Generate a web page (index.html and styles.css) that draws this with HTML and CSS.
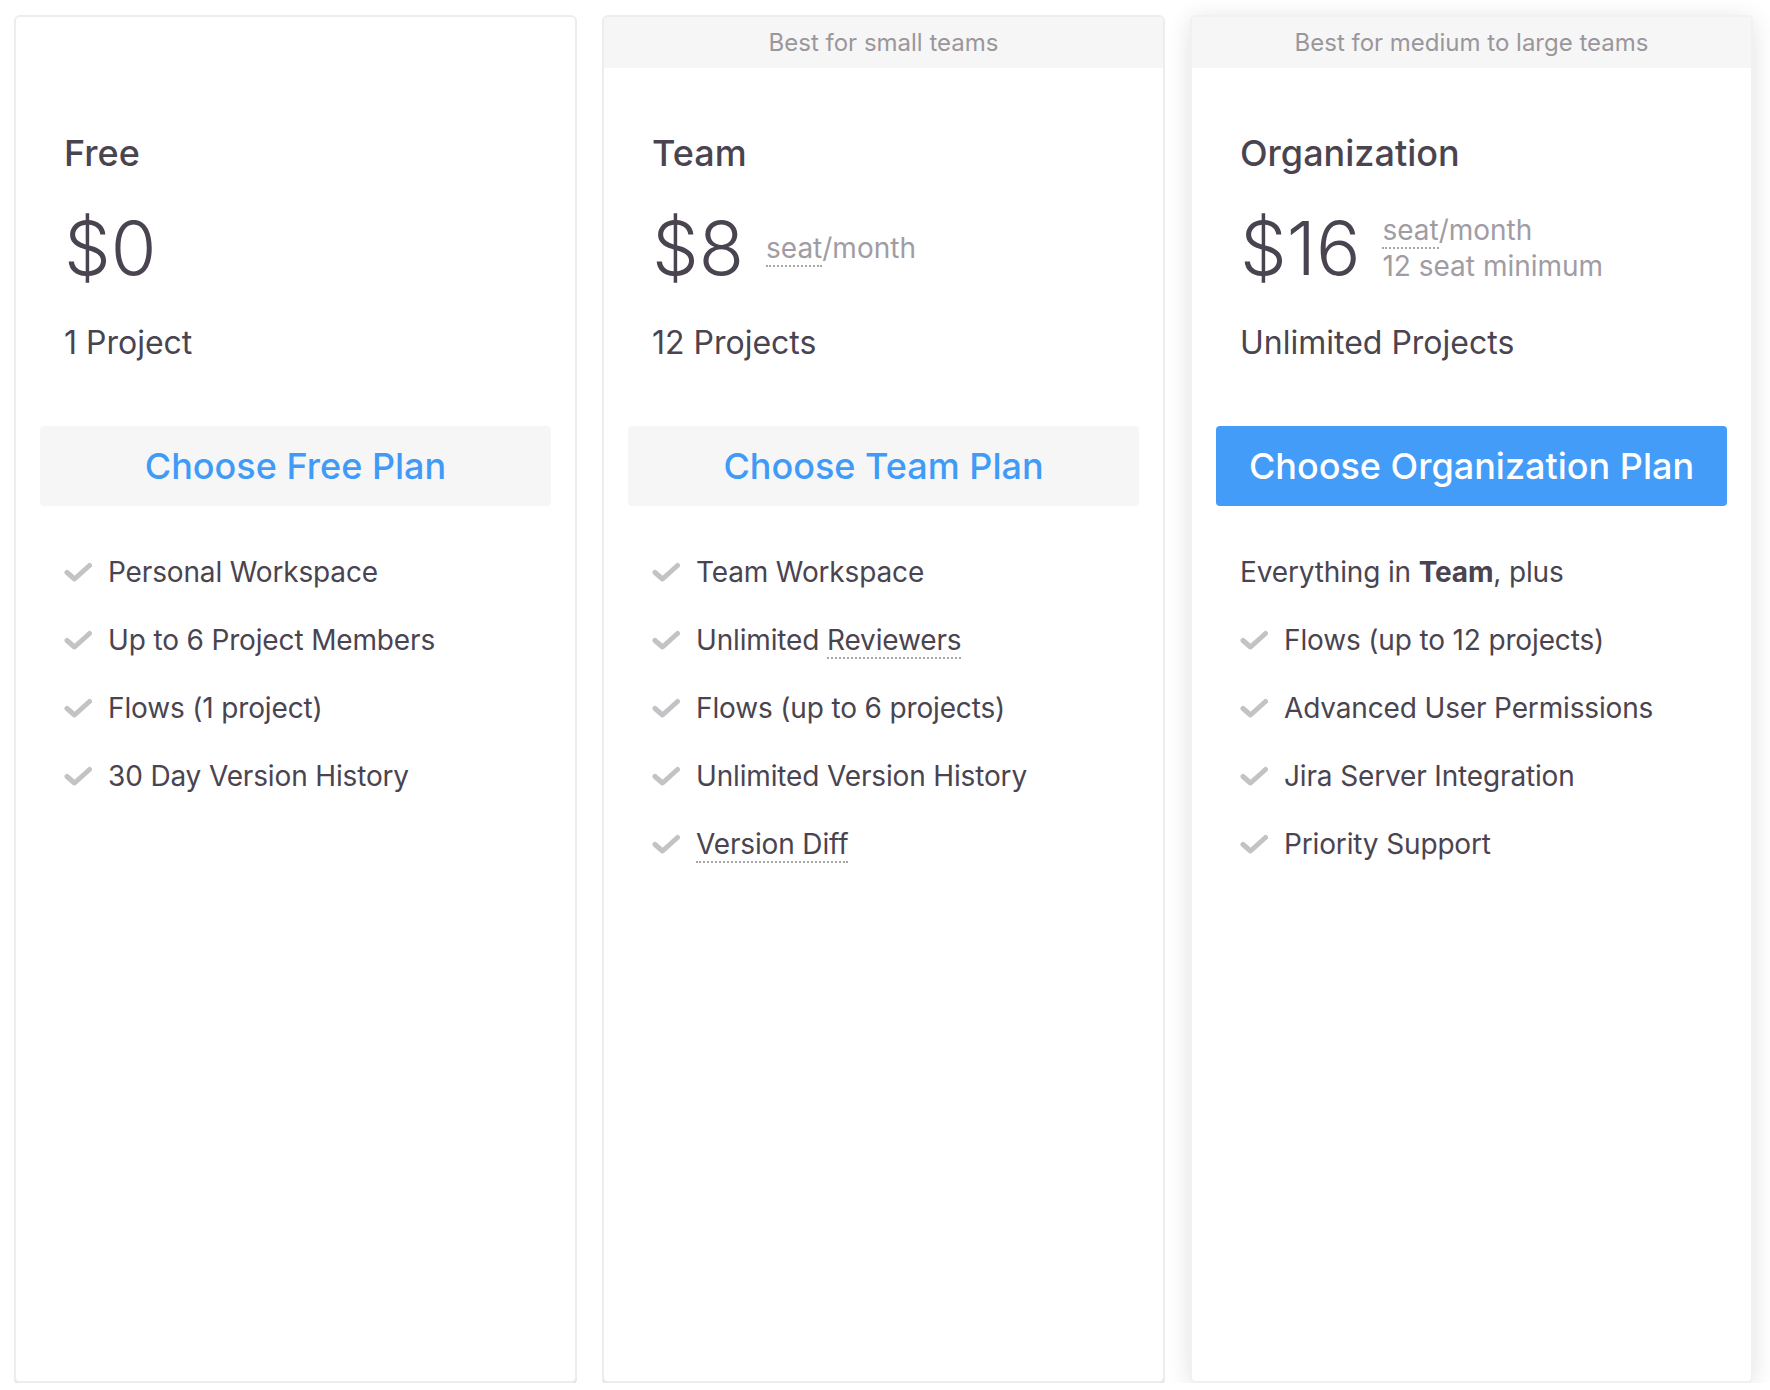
FILE: index.html
```html
<!DOCTYPE html>
<html lang="en">
<head>
<meta charset="utf-8">
<title>Plans</title>
<link rel="stylesheet" href="styles.css">
</head>
<body>
<div class="plans">
  <section class="card">
    <div class="band band-blank"></div>
    <div class="card-body">
      <h2 class="plan-name">Free</h2>
      <div class="price-row">
        <span class="price">$0</span>
      </div>
      <p class="projects">1 Project</p>
      <a class="choose">Choose Free Plan</a>
      <ul class="features">
        <li class="feature"><svg class="check" viewBox="0 0 28 20" width="28" height="20"><path d="M3 10.5 L10.5 17 L25.5 3.5"/></svg><span>Personal Workspace</span></li>
        <li class="feature"><svg class="check" viewBox="0 0 28 20" width="28" height="20"><path d="M3 10.5 L10.5 17 L25.5 3.5"/></svg><span>Up to 6 Project Members</span></li>
        <li class="feature"><svg class="check" viewBox="0 0 28 20" width="28" height="20"><path d="M3 10.5 L10.5 17 L25.5 3.5"/></svg><span>Flows (1 project)</span></li>
        <li class="feature"><svg class="check" viewBox="0 0 28 20" width="28" height="20"><path d="M3 10.5 L10.5 17 L25.5 3.5"/></svg><span>30 Day Version History</span></li>
      </ul>
    </div>
  </section>

  <section class="card">
    <div class="band">Best for small teams</div>
    <div class="card-body">
      <h2 class="plan-name">Team</h2>
      <div class="price-row">
        <span class="price">$8</span>
        <span class="unit"><span class="dotted">seat</span>/month</span>
      </div>
      <p class="projects">12 Projects</p>
      <a class="choose">Choose Team Plan</a>
      <ul class="features">
        <li class="feature"><svg class="check" viewBox="0 0 28 20" width="28" height="20"><path d="M3 10.5 L10.5 17 L25.5 3.5"/></svg><span>Team Workspace</span></li>
        <li class="feature"><svg class="check" viewBox="0 0 28 20" width="28" height="20"><path d="M3 10.5 L10.5 17 L25.5 3.5"/></svg><span>Unlimited <span class="dotted">Reviewers</span></span></li>
        <li class="feature"><svg class="check" viewBox="0 0 28 20" width="28" height="20"><path d="M3 10.5 L10.5 17 L25.5 3.5"/></svg><span>Flows (up to 6 projects)</span></li>
        <li class="feature"><svg class="check" viewBox="0 0 28 20" width="28" height="20"><path d="M3 10.5 L10.5 17 L25.5 3.5"/></svg><span>Unlimited Version History</span></li>
        <li class="feature"><svg class="check" viewBox="0 0 28 20" width="28" height="20"><path d="M3 10.5 L10.5 17 L25.5 3.5"/></svg><span><span class="dotted">Version Diff</span></span></li>
      </ul>
    </div>
  </section>

  <section class="card card-featured">
    <div class="band">Best for medium to large teams</div>
    <div class="card-body">
      <h2 class="plan-name">Organization</h2>
      <div class="price-row">
        <span class="price">$16</span>
        <span class="unit"><span class="dotted">seat</span>/month<br>12 seat minimum</span>
      </div>
      <p class="projects">Unlimited Projects</p>
      <a class="choose choose-primary">Choose Organization Plan</a>
      <ul class="features">
        <li class="feature feature-intro"><span>Everything in <b>Team</b>, plus</span></li>
        <li class="feature"><svg class="check" viewBox="0 0 28 20" width="28" height="20"><path d="M3 10.5 L10.5 17 L25.5 3.5"/></svg><span>Flows (up to 12 projects)</span></li>
        <li class="feature"><svg class="check" viewBox="0 0 28 20" width="28" height="20"><path d="M3 10.5 L10.5 17 L25.5 3.5"/></svg><span>Advanced User Permissions</span></li>
        <li class="feature"><svg class="check" viewBox="0 0 28 20" width="28" height="20"><path d="M3 10.5 L10.5 17 L25.5 3.5"/></svg><span>Jira Server Integration</span></li>
        <li class="feature"><svg class="check" viewBox="0 0 28 20" width="28" height="20"><path d="M3 10.5 L10.5 17 L25.5 3.5"/></svg><span>Priority Support</span></li>
      </ul>
    </div>
  </section>
</div>
</body>
</html>
```

FILE: styles.css
```css
* {
  box-sizing: border-box;
}

html, body {
  margin: 0;
  padding: 0;
  background: #ffffff;
  overflow: hidden;
}

body {
  font-family: Inter, "Noto Sans", "Liberation Sans", sans-serif;
  color: #4a4450;
}

.plans {
  display: grid;
  grid-template-columns: repeat(3, 563px);
  column-gap: 25px;
  padding: 15px 0 0 14px;
}

.card {
  height: 1368px;
  background: #ffffff;
  border: 2px solid #ededed;
  border-radius: 6px;
  box-shadow: 0 2px 0 #e3e3e3;
  overflow: hidden;
  display: flex;
  flex-direction: column;
}

.card-featured {
  border-color: #f1f1f1;
  box-shadow: 0 4px 24px rgba(0, 0, 0, 0.12);
}

.band {
  height: 51px;
  line-height: 51px;
  background: #f6f6f6;
  color: #9b969c;
  font-size: 24px;
  text-align: center;
  flex: none;
}

.band-blank {
  background: transparent;
}

.card-body {
  padding: 0 24px;
}

.plan-name {
  margin: 63px 0 0;
  padding-left: 24px;
  font-size: 36px;
  line-height: 44px;
  font-weight: 500;
  color: #4a4450;
}

.price-row {
  margin-top: 33px;
  padding-left: 24px;
  height: 80px;
  display: flex;
  align-items: center;
}

.price {
  font-size: 74px;
  line-height: 80px;
  font-weight: 300;
  color: #4a4450;
}

.unit {
  margin-left: 22px;
  font-size: 28px;
  line-height: 36px;
  color: #a19ca3;
}

.dotted {
  border-bottom: 2px dotted #a6a6a6;
}

.projects {
  margin: 35px 0 0;
  padding-left: 24px;
  font-size: 32px;
  line-height: 40px;
  color: #4a4450;
}

.choose {
  display: block;
  margin-top: 63px;
  height: 80px;
  line-height: 80px;
  border-radius: 4px;
  background: #f6f6f6;
  color: #3f9bf7;
  font-size: 36px;
  font-weight: 500;
  text-align: center;
  text-decoration: none;
}

.choose-primary {
  background: #439cf7;
  color: #ffffff;
}

.features {
  list-style: none;
  margin: 32px 0 0;
  padding: 0 0 0 24px;
}

.feature {
  display: flex;
  align-items: center;
  height: 68px;
  font-size: 28px;
  line-height: 68px;
  letter-spacing: -0.15px;
  color: #4a4450;
}

.feature b {
  font-weight: 700;
}

.check {
  flex: none;
  margin-right: 16px;
}

.check path {
  fill: none;
  stroke: #c4c2c5;
  stroke-width: 5;
  stroke-linecap: round;
  stroke-linejoin: round;
}
```
